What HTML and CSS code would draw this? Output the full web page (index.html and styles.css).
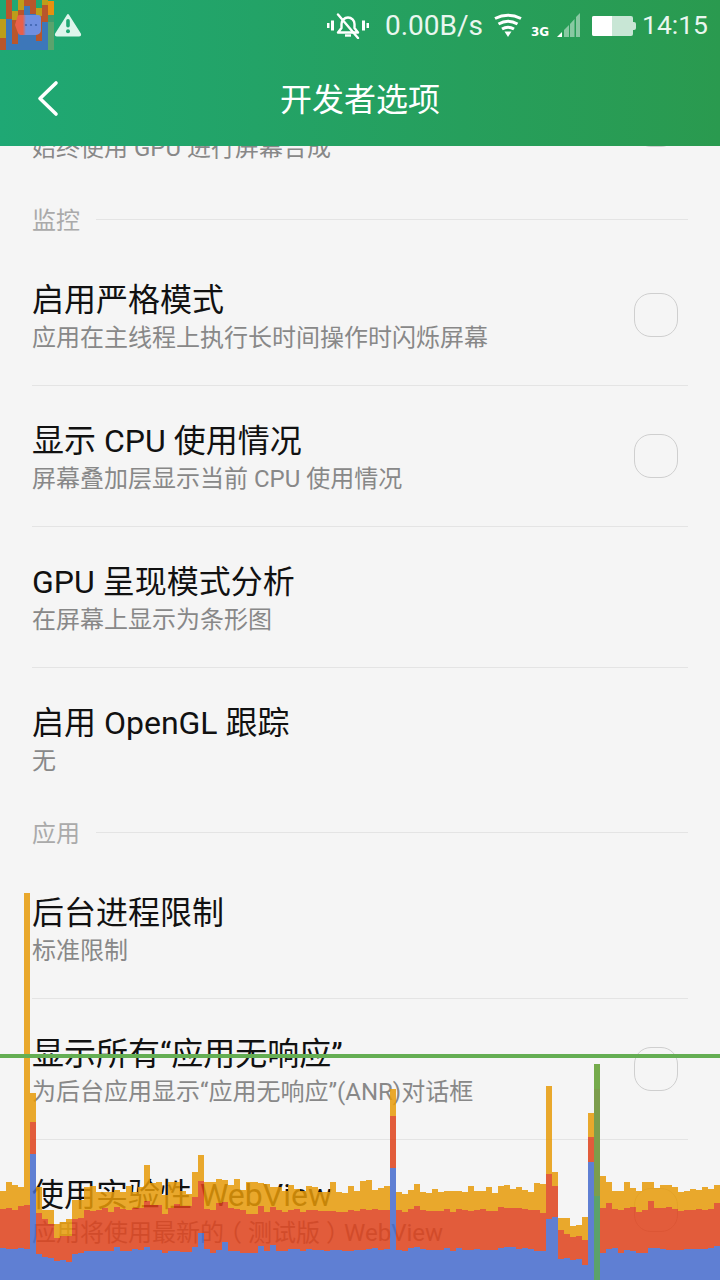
FILE: index.html
```html
<!DOCTYPE html>
<html lang="zh-CN">
<head>
<meta charset="utf-8">
<title>开发者选项</title>
<link rel="stylesheet" href="styles.css">
</head>
<body>
<div class="screen">
  <main class="list">
    <div class="row plain">
      <div class="text"><div class="title"></div><div class="sub">始终使用 GPU 进行屏幕合成</div></div>
      <div class="toggle"></div>
    </div>
    <div class="section"><span class="section-name">监控</span><span class="section-line"></span></div>
    <div class="row">
      <div class="text"><div class="title">启用严格模式</div><div class="sub">应用在主线程上执行长时间操作时闪烁屏幕</div></div>
      <div class="toggle"></div>
    </div>
    <div class="row">
      <div class="text"><div class="title">显示 CPU 使用情况</div><div class="sub">屏幕叠加层显示当前 CPU 使用情况</div></div>
      <div class="toggle"></div>
    </div>
    <div class="row">
      <div class="text"><div class="title">GPU 呈现模式分析</div><div class="sub">在屏幕上显示为条形图</div></div>
    </div>
    <div class="row plain">
      <div class="text"><div class="title">启用 OpenGL 跟踪</div><div class="sub">无</div></div>
    </div>
    <div class="section"><span class="section-name">应用</span><span class="section-line"></span></div>
    <div class="row">
      <div class="text"><div class="title">后台进程限制</div><div class="sub">标准限制</div></div>
    </div>
    <div class="row">
      <div class="text"><div class="title">显示所有“应用无响应”</div><div class="sub">为后台应用显示“应用无响应”(ANR)对话框</div></div>
      <div class="toggle"></div>
    </div>
    <div class="row plain">
      <div class="text"><div class="title">使用实验性 WebView</div><div class="sub">应用将使用最新的<span class="paren">（</span>测试版<span class="paren">）</span>WebView</div></div>
      <div class="toggle"></div>
    </div>
  </main>

  <header class="header">
    <div class="status">
      <div class="status-left">
        <svg class="thumb" width="54" height="50" viewBox="0 0 54 50">
          <defs>
            <linearGradient id="bubble" x1="0" y1="0" x2="1" y2="0">
              <stop offset="0" stop-color="#e8604a"/>
              <stop offset=".3" stop-color="#e8604a"/>
              <stop offset=".42" stop-color="#6f8fe0"/>
              <stop offset="1" stop-color="#6f8fe0"/>
            </linearGradient>
          </defs>
          <g fill="#b9562b">
            <rect x="0" y="38" width="6" height="12"/><rect x="6" y="0" width="6" height="19"/>
            <rect x="12" y="20" width="6" height="24"/><rect x="18" y="10" width="6" height="10"/>
            <rect x="24" y="0" width="6" height="6"/><rect x="30" y="0" width="6" height="14"/>
            <rect x="36" y="16" width="6" height="25"/><rect x="42" y="5" width="6" height="17"/>
          </g>
          <g fill="#bd9d1a">
            <rect x="0" y="19" width="6" height="19"/><rect x="12" y="11" width="6" height="9"/>
            <rect x="18" y="0" width="6" height="10"/><rect x="36" y="8" width="6" height="8"/>
            <rect x="42" y="0" width="6" height="5"/>
          </g>
          <g fill="#3d77b9">
            <rect x="6" y="19" width="6" height="31"/><rect x="12" y="44" width="6" height="6"/>
            <rect x="18" y="20" width="6" height="30"/><rect x="24" y="6" width="6" height="44"/>
            <rect x="30" y="14" width="6" height="36"/><rect x="36" y="41" width="6" height="9"/>
            <rect x="42" y="22" width="6" height="28"/>
          </g>
          <rect x="48" y="1" width="6" height="14" fill="#e8900f"/>
          <rect x="48" y="15" width="6" height="7" fill="#3d9c6e"/>
          <rect x="48" y="22" width="6" height="28" fill="#5ba36d"/>
          <path class="thumb-bubble" d="M20 15h18a3 3 0 0 1 3 3v12a5 5 0 0 1-5 5H21a3 3 0 0 1-3-2l-3-8 2-7a3 3 0 0 1 3-3z"/>
          <circle cx="26" cy="25" r="1.1" fill="#3f64b0"/><circle cx="31" cy="25" r="1.1" fill="#3f64b0"/><circle cx="36" cy="25" r="1.1" fill="#3f64b0"/>
        </svg>
        <svg class="warn" width="28" height="24" viewBox="0 0 28 24">
          <path d="M14 2 L26 21 Q26.5 22.5 25 22.5 H3 Q1.5 22.5 2 21 Z" fill="#def5ec" stroke="#def5ec" stroke-width="2" stroke-linejoin="round"/>
          <rect x="12.2" y="6" width="3.6" height="8.5" rx="1.8" fill="#1fa873"/>
          <circle cx="14" cy="18.3" r="2" fill="#1fa873"/>
        </svg>
      </div>
      <div class="status-right">
        <svg class="bell" width="42" height="26" viewBox="0 0 42 26">
          <g fill="#fff"><rect x="0" y="10" width="2.5" height="5"/><rect x="4" y="7.5" width="3" height="10"/>
          <rect x="35" y="7.5" width="3" height="10"/><rect x="39.5" y="10" width="2.5" height="5"/></g>
          <path d="M11 19.5 h20 l-3.5-4.5 v-4 a6.5 6.5 0 0 0-13 0 v4 z" fill="none" stroke="#fff" stroke-width="2.4" stroke-linejoin="round"/>
          <path d="M18 22.5 h6" stroke="#fff" stroke-width="2.4"/>
          <path d="M11 1.5 L31 25" stroke="#fff" stroke-width="2.4" stroke-linecap="round"/>
        </svg>
        <span class="speed">0.00B/s</span>
        <svg class="wifi" width="28" height="24" viewBox="0 0 28 24">
          <g fill="none" stroke="#fff" stroke-width="3">
            <path d="M1 5.500 Q14 -1 27 5.500"/><path d="M4.500 11 Q14 5.500 23.500 11"/><path d="M8 16 Q14 12.500 20 16"/>
          </g>
          <path d="M10.500 18.500 H17.500 L14 24 Z" fill="#fff"/>
        </svg>
        <span class="net">3G</span>
        <svg class="signal" width="24" height="24" viewBox="0 0 24 24">
          <path d="M1 24 L6 19 V24 Z" fill="#fff"/>
          <g fill="#fff" opacity=".45"><path d="M8 17 L13 12 V24 H8 Z"/><path d="M14 11 L18.500 6 V24 H14 Z"/><path d="M20 4 L24 0 V24 H20 Z"/></g>
        </svg>
        <div class="battery"><div class="battery-fill"></div></div>
        <span class="clock">14:15</span>
      </div>
    </div>
    <div class="toolbar">
      <svg class="back" width="24" height="38" viewBox="0 0 24 38">
        <path d="M20 3 L4 18.500 L20 34" fill="none" stroke="#fff" stroke-width="3.600" stroke-linecap="round" stroke-linejoin="round"/>
      </svg>
      <h1 class="toolbar-title">开发者选项</h1>
      <span></span>
    </div>
  </header>

  <svg class="profile" id="profile" width="720" height="1280" viewBox="0 0 720 1280"></svg>
</div>
<script src="script.js"></script>
</body>
</html>
```

FILE: styles.css
```css
* { box-sizing: border-box; }
html, body { margin: 0; padding: 0; }
body { font-family: Roboto, "Noto Sans CJK SC", sans-serif; background: #f5f5f5; }
.screen { position: relative; width: 720px; height: 1280px; overflow: hidden; background: #f5f5f5; }

.list { padding: 55px 32px 0; }
.row { display: flex; justify-content: space-between; align-items: flex-start; height: 141px; padding-top: 35px; border-bottom: 1px solid #e4e4e4; }
.row.plain { border-bottom-color: transparent; }
.title { min-height: 40px; font-size: 32px; line-height: 40px; color: #111; white-space: nowrap; }
.sub { font-size: 24px; line-height: 36px; color: #888; white-space: nowrap; }
.paren { padding: 0 6px; font-feature-settings: "halt"; }
.toggle { width: 44px; height: 44px; margin: 13px 10px 0 0; border: 1.5px solid #cfcfcf; border-radius: 17px; }
.section { display: flex; align-items: center; height: 49px; gap: 16px; }
.section-name { font-size: 24px; line-height: 50px; color: #aaa; }
.section-line { flex: 1; height: 1px; margin-bottom: 2px; background: #e4e4e4; }

.header { position: absolute; top: 0; left: 0; width: 720px; height: 146px; background: linear-gradient(90deg, #1fa874, #2a9a4f); }
.status { display: flex; justify-content: space-between; height: 50px; }
.status-left { display: flex; align-items: flex-start; }
.thumb { display: block; }
.thumb-bubble { fill: url(#bubble); }
.warn { margin: 13px 0 0 0; }
.status-right { display: flex; align-items: flex-start; padding-right: 12px; }
.bell { margin-top: 13px; }
.speed { margin: 8px 0 0 16px; font-size: 28px; line-height: 36px; color: #e9f6ef; }
.wifi { margin: 13px 0 0 11px; }
.net { margin: 25px 0 0 9px; width: 18px; font: bold 12px/14px "DejaVu Sans", sans-serif; color: #fff; white-space: nowrap; }
.signal { margin: 13px 0 0 7px; }
.battery { position: relative; width: 41px; height: 20px; margin: 16px 0 0 12px; border-radius: 2px; background: #c8e6d5; }
.battery::after { content: ""; position: absolute; left: 41px; top: 6px; width: 3px; height: 8px; border-radius: 0 2px 2px 0; background: #c8e6d5; }
.battery-fill { width: 20px; height: 20px; border-radius: 2px 0 0 2px; background: #fff; }
.clock { margin: 7px 0 0 9px; font-size: 26.5px; line-height: 36px; color: #e9f6ef; }

.toolbar { display: grid; grid-template-columns: 1fr auto 1fr; align-items: center; height: 96px; padding-left: 36px; }
.back { display: block; }
.toolbar-title { margin: 2px 0 0 -36px; font-size: 32px; line-height: 96px; font-weight: 400; color: #fff; }

.profile { position: absolute; top: 0; left: 0; pointer-events: none; }
.profile .yellow { fill: rgba(230, 154, 8, .85); }
.profile .red { fill: rgba(222, 65, 26, .85); }
.profile .blue { fill: rgba(68, 106, 205, .85); }
.profile .line { fill: #64ae53; }
.profile .g1 { fill: #75ab4b; }
.profile .g2 { fill: #7c9d4c; }
.profile .g3 { fill: #5ba26b; }
```

FILE: script.js
```js
// Per-column tops of the three stacked bands, in thirds of a pixel below y=1150.
var columns = [
  [124,177,294],[97,174,297],[106,180,297],[111,168,294],[-771,165,297],[-171,-84,12],
  [110,190,312],[180,208,320],[180,222,323],[222,264,333],[215,258,330],[207,258,335],
  [150,207,312],[150,204,309],[110,180,303],[108,183,303],[125,180,303],[125,174,303],
  [125,186,303],[120,171,291],[125,177,303],[108,180,303],[125,174,297],[110,174,300],
  [45,153,291],[100,165,299],[95,165,300],[135,192,309],[95,174,303],[95,162,303],
  [123,168,306],[132,168,306],[66,141,292],[15,93,250],[96,177,297],[96,180,309],
  [87,159,300],[90,156,276],[105,174,303],[87,177,303],[120,180,309],[96,192,309],
  [96,192,309],[99,168,288],[102,186,303],[111,171,285],[111,180,303],[123,186,303],
  [105,180,297],[117,177,298],[123,186,303],[108,180,297],[111,180,300],[126,183,300],
  [126,183,303],[96,183,300],[126,185,300],[129,186,303],[108,180,303],[123,183,300],
  [93,177,300],[90,180,297],[120,177,294],[114,180,300],[108,180,297],[-183,-102,54],
  [126,180,300],[132,186,303],[120,177,294],[102,168,291],[126,180,297],[129,183,300],
  [117,183,300],[126,183,300],[123,177,294],[123,186,303],[123,177,294],[126,180,300],
  [108,183,300],[123,180,297],[123,177,300],[111,183,300],[129,183,300],[108,171,294],
  [105,174,291],[117,174,291],[111,174,297],[120,177,294],[126,180,298],[99,180,303],
  [102,189,303],[-192,72,207],[66,108,201],[204,240,327],[204,252,324],[228,261,330],
  [225,258,327],[201,270,345],[-111,-39,36],null,[78,174,309],[96,159,297],
  [123,177,294],[123,180,309],[96,174,300],[114,171,303],[123,186,309],[96,180,309],
  [96,153,294],[114,174,294],[105,174,298],[105,171,300],[111,177,300],[126,183,300],
  [123,180,298],[117,180,298],[120,177,298],[111,180,298],[117,177,294],[105,159,288]
];

var svg = document.getElementById('profile');

function bar(x, y, w, h, cls) {
  var r = document.createElementNS('http://www.w3.org/2000/svg', 'rect');
  r.setAttribute('x', x);
  r.setAttribute('y', y);
  r.setAttribute('width', w);
  r.setAttribute('height', h);
  r.setAttribute('class', cls);
  svg.appendChild(r);
}

function abs(z) { return 1150 + Math.round(z / 3); }

columns.forEach(function (c, i) {
  if (!c) return;
  var x = i * 6, y = abs(c[0]), r = abs(c[1]), b = abs(c[2]);
  bar(x, y, 6, r - y, 'yellow');
  bar(x, r, 6, b - r, 'red');
  bar(x, b, 6, 1280 - b, 'blue');
});

bar(594, 1064, 6, 25, 'g1');
bar(594, 1089, 6, 107, 'g2');
bar(594, 1196, 6, 84, 'g3');
bar(0, 1054, 720, 4, 'line');
```
